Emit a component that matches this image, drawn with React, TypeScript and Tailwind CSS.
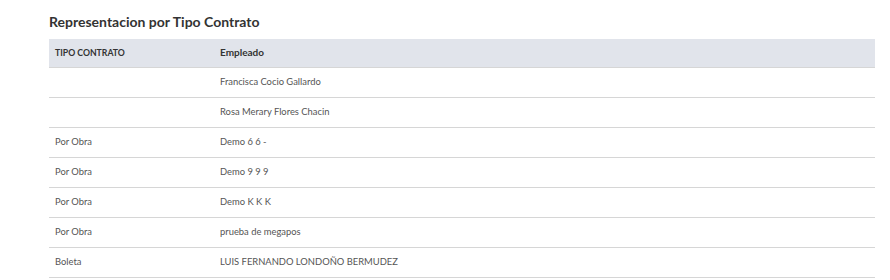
const rows = [
  { tipo: '', empleado: 'Francisca Cocio Gallardo' },
  { tipo: '', empleado: 'Rosa Merary Flores Chacin' },
  { tipo: 'Por Obra', empleado: 'Demo 6 6 -' },
  { tipo: 'Por Obra', empleado: 'Demo 9 9 9' },
  { tipo: 'Por Obra', empleado: 'Demo K K K' },
  { tipo: 'Por Obra', empleado: 'prueba de megapos' },
  { tipo: 'Boleta', empleado: 'LUIS FERNANDO LONDOÑO BERMUDEZ' },
];

export default function App() {
  return (
    <div className="w-[890px] h-[280px] bg-white font-['Lato','Liberation_Sans',sans-serif] overflow-hidden">
      <div className="pl-[49px] pr-[15px] pt-[12px]">
        <h2 className="text-[14px] leading-[20px] font-bold text-[#333] mb-[7px]">Representacion por Tipo Contrato</h2>
        <table className="w-full border-collapse">
          <thead>
            <tr className="bg-[#e1e4eb] border-b border-[#d6d6d6]">
              <th className="h-[28px] w-[165px] pl-[6px] text-left font-bold text-[8.7px] text-[#333]">TIPO CONTRATO</th>
              <th className="h-[28px] pl-[6px] text-left font-bold text-[10px] text-[#333]">Empleado</th>
            </tr>
          </thead>
          <tbody className="text-[9.4px] text-[#555]">
            {rows.map((r, i) => (
              <tr key={i} className="border-b border-[#d6d6d6]">
                <td className="h-[30px] pl-[6px]">{r.tipo}</td>
                <td className="h-[30px] pl-[6px]">{r.empleado}</td>
              </tr>
            ))}
          </tbody>
        </table>
      </div>
    </div>
  );
}
